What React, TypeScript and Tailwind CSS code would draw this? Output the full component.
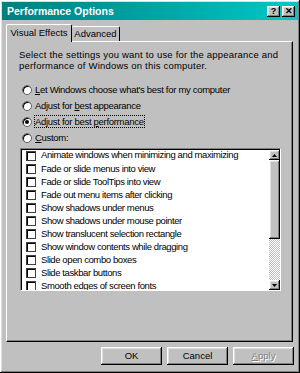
import React from "react";

const FONT = { fontFamily: '"Liberation Sans", Arial, sans-serif' };

const effects = [
  "Animate windows when minimizing and maximizing",
  "Fade or slide menus into view",
  "Fade or slide ToolTips into view",
  "Fade out menu items after clicking",
  "Show shadows under menus",
  "Show shadows under mouse pointer",
  "Show translucent selection rectangle",
  "Show window contents while dragging",
  "Slide open combo boxes",
  "Slide taskbar buttons",
  "Smooth edges of screen fonts",
];

const raised =
  "shadow-[inset_-1px_-1px_#000,inset_1px_1px_#fff,inset_-2px_-2px_#808080,inset_2px_2px_#dfdfdf]";

const Radio = ({ checked, children }: { checked?: boolean; children: React.ReactNode }) => (
  <div className="flex items-center h-[16px]">
    <span className="w-[10px] h-[10px] rounded-full bg-white border border-[#606060] shadow-[inset_1px_1px_#000] flex items-center justify-center">
      {checked && <span className="w-[4px] h-[4px] rounded-full bg-black" />}
    </span>
    <span className="ml-[3px] tracking-[-0.3px]">{children}</span>
  </div>
);

const TitleButton = ({ children }: { children: React.ReactNode }) => (
  <div className={`w-[13px] h-[11px] bg-[#c0c0c0] ${raised} flex items-center justify-center text-[9px] font-bold leading-none text-black`}>
    {children}
  </div>
);

const Button = ({ children, disabled }: { children: React.ReactNode; disabled?: boolean }) => (
  <div className={`w-[61px] h-[18px] bg-[#c0c0c0] ${raised} flex items-center justify-center`}>
    <span className={disabled ? "text-[#808080] [text-shadow:1px_1px_#fff]" : "text-black"}>{children}</span>
  </div>
);

export default function App() {
  return (
    <div className="w-[300px] h-[373px] bg-[#c0c0c0] overflow-hidden text-[9.5px] text-black" style={FONT}>
      <div className={`w-[300px] h-[373px] p-[2px] flex flex-col ${raised}`}>
        {/* title bar */}
        <div className="h-[18px] bg-gradient-to-r from-[#008080] to-[#00c8c8] flex items-center pl-[5px] pr-[3px]">
          <span className="text-white font-bold text-[10.5px] leading-none">Performance Options</span>
          <div className="ml-auto flex gap-[2px]">
            <TitleButton>?</TitleButton>
            <TitleButton>✕</TitleButton>
          </div>
        </div>

        {/* tabs */}
        <div className="flex items-end h-[21px] ml-[4px]">
          <div className="relative z-10 h-[18px] w-[66px] bg-[#c0c0c0] border-t border-l border-white border-r border-r-black rounded-t-[2px] flex items-center justify-center mb-[-1px] pb-[1px]">
            Visual Effects
          </div>
          <div className="h-[15px] w-[48px] bg-[#c0c0c0] border-t border-white border-r border-r-black rounded-t-[2px] flex items-center justify-center">
            Advanced
          </div>
        </div>

        {/* tab panel */}
        <div className="ml-[4px] mr-[5px] h-[301px] border-t border-l border-white border-r border-b border-r-black border-b-black shadow-[inset_-1px_-1px_#808080] pl-[12px] pr-[9px] pt-[7px]">
          <p className="leading-[11px] tracking-[0.2px]">
            Select the settings you want to use for the appearance and performance of Windows on this computer.
          </p>
          <div className="mt-[11px] ml-[3px] flex flex-col">
            <Radio>
              <u>L</u>et Windows choose what's best for my computer
            </Radio>
            <Radio>
              Adjust for <u>b</u>est appearance
            </Radio>
            <Radio checked>
              <span className="outline outline-1 outline-dotted outline-black">
                Adjust for best <u>p</u>erformance
              </span>
            </Radio>
            <Radio>
              <u>C</u>ustom:
            </Radio>
          </div>

          {/* list box */}
          <div className="mt-[2px] ml-[1px] h-[143px] w-[261px] bg-white flex border border-t-[#808080] border-l-[#808080] border-r-white border-b-white shadow-[inset_1px_1px_#000]">
            <div className="flex-1 pl-[5px] pt-[0px] flex flex-col overflow-hidden tracking-[-0.4px]">
              {effects.map((e) => (
                <div key={e} className="flex items-center h-[13.1px] shrink-0">
                  <span className="w-[10px] h-[10px] border border-[#404040] shadow-[inset_1px_1px_#000] bg-white shrink-0" />
                  <span className="ml-[5px] whitespace-nowrap">{e}</span>
                </div>
              ))}
            </div>
            <div className="w-[11px] mt-[1px] flex flex-col bg-[repeating-conic-gradient(#fff_0_25%,#c0c0c0_0_50%)] bg-[length:2px_2px]">
              <div className={`h-[10px] bg-[#c0c0c0] ${raised} flex items-center justify-center`}>
                <svg width="5" height="3" viewBox="0 0 5 3"><path d="M2.5 0 L5 3 L0 3Z" fill="#000" /></svg>
              </div>
              <div className={`h-[79px] bg-[#c0c0c0] ${raised}`} />
              <div className="flex-1" />
              <div className={`h-[10px] bg-[#c0c0c0] ${raised} flex items-center justify-center`}>
                <svg width="5" height="3" viewBox="0 0 5 3"><path d="M0 0 L5 0 L2.5 3Z" fill="#000" /></svg>
              </div>
            </div>
          </div>
        </div>

        {/* buttons */}
        <div className="flex justify-end gap-[5px] mr-[4px] mt-[5px]">
          <Button>OK</Button>
          <Button>Cancel</Button>
          <Button disabled>
            <u>A</u>pply
          </Button>
        </div>
      </div>
    </div>
  );
}
